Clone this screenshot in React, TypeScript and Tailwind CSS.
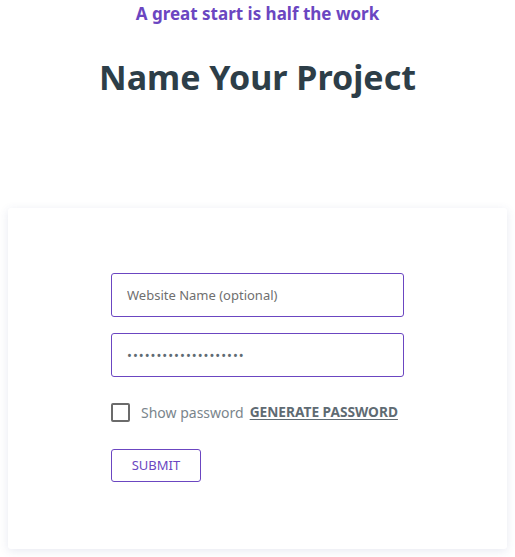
import { useState } from "react";

export default function App() {
  const [name, setName] = useState("");
  const [pw, setPw] = useState("dkR8xQ2mPz7LwN4vTb9e");
  const [show, setShow] = useState(false);

  return (
    <div
      className="min-h-[557px] bg-white px-2 pt-[3px]"
      style={{ fontFamily: '"Noto Sans", "Open Sans", sans-serif' }}
    >
      <p className="text-center text-[17px] font-bold leading-[22px] text-[#6b46c1]">
        A great start is half the work
      </p>
      <h1 className="mt-[30px] text-center text-[34px] font-bold leading-[44px] text-[#2d3e48]">
        Name Your Project
      </h1>

      <div className="mt-[109px] rounded-[3px] bg-white px-[103px] pb-[67px] pt-[65px] shadow-[0_2px_10px_rgba(60,70,140,0.12)]">
        <div className="flex flex-col gap-4">
          <input
            value={name}
            onChange={(e) => setName(e.target.value)}
            placeholder="Website Name (optional)"
            className="h-[44px] w-full rounded-[3px] border border-[#6b46c1] bg-white px-[15px] text-[13px] text-[#2d3e48] outline-none placeholder:text-[#6f6f6f]"
          />
          <input
            type={show ? "text" : "password"}
            value={pw}
            onChange={(e) => setPw(e.target.value)}
            className="h-[44px] w-full rounded-[3px] border border-[#6b46c1] bg-white px-[15px] text-[13px] tracking-[1px] text-[#5f6b73] outline-none"
          />
        </div>

        <div className="mt-[25px] flex items-center">
          <label className="flex cursor-pointer items-center">
            <input
              type="checkbox"
              checked={show}
              onChange={(e) => setShow(e.target.checked)}
              className="peer sr-only"
            />
            <span className="h-[19px] w-[19px] rounded-[2px] border-2 border-[#6b6b6b] bg-white" />
            <span className="ml-[11px] text-[14px] text-[#7a858c]">Show password</span>
          </label>
          <button className="ml-[6px] text-[13.7px] font-bold text-[#5f6b73] underline underline-offset-2">
            GENERATE PASSWORD
          </button>
        </div>

        <button className="mt-[26px] h-[33px] w-[90px] rounded-[3px] border border-[#6b46c1] bg-white text-[13px] text-[#6b46c1]">
          SUBMIT
        </button>
      </div>
    </div>
  );
}
